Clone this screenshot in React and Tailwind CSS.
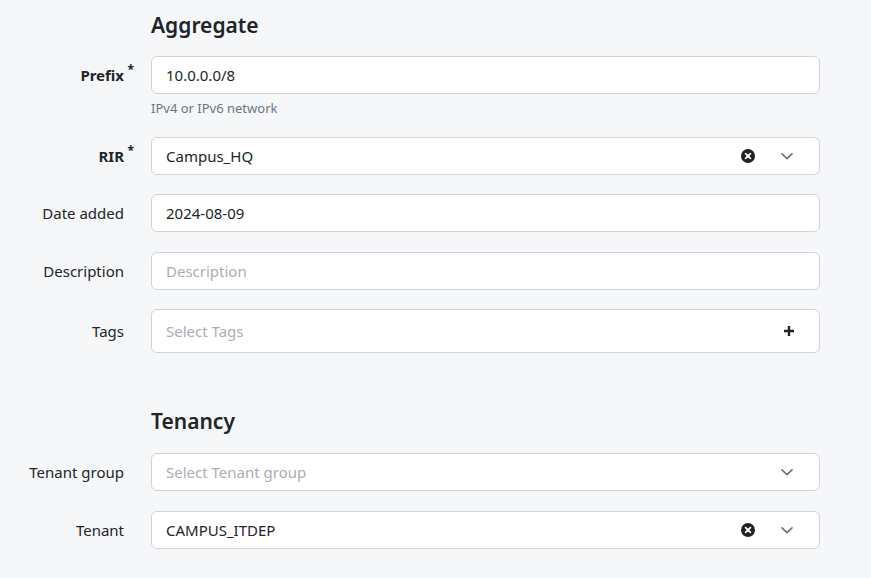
import React from "react";

function ClearIcon() {
    return (
        <svg width="14" height="14" viewBox="0 0 14 14">
            <circle cx="7" cy="7" r="7" fill="#1f2328" />
            <path d="M4.6 4.6 L9.4 9.4 M9.4 4.6 L4.6 9.4" stroke="#fff" strokeWidth="1.8" strokeLinecap="round" />
        </svg>
    );
}

function Chevron() {
    return (
        <svg width="14" height="14" viewBox="0 0 14 14" fill="none">
            <path d="M2 4.8 L7 9.6 L12 4.8" stroke="#6c757d" strokeWidth="1.7" strokeLinecap="round" strokeLinejoin="round" />
        </svg>
    );
}

function Plus() {
    return (
        <svg width="12" height="12" viewBox="0 0 12 12">
            <path d="M6 1 V11 M1 6 H11" stroke="#1f2328" strokeWidth="2.4" />
        </svg>
    );
}

function Label({ children, required, tall }) {
    return (
        <div className={`relative w-[124px] shrink-0 flex items-center justify-end ${tall ? "h-[44px]" : "h-[38px]"} ${required ? "font-bold" : ""}`}>
            <span>{children}</span>
            {required && <span className="absolute right-[-10px] top-[8px] text-[12px] leading-none font-bold">*</span>}
        </div>
    );
}

function Field({ value, placeholder, clear, chevron, plus, tall }) {
    return (
        <div className={`w-[669px] ${tall ? "h-[44px]" : "h-[38px]"} bg-white border border-[#ced4da] rounded-[6px] flex items-center pl-[14px] pr-[25px]`}>
            <span className={`flex-1 ${value ? "text-[#212529]" : "text-[#a9aeb4]"}`}>{value || placeholder}</span>
            {clear && <span className="mr-[25px] flex"><ClearIcon /></span>}
            {chevron && <span className="flex"><Chevron /></span>}
            {plus && <span className="flex mr-[-1px]"><Plus /></span>}
        </div>
    );
}

function Row({ label, required, tall, children, className }) {
    return (
        <div className={`flex items-start gap-[27px] ${className || ""}`}>
            <Label required={required} tall={tall}>{label}</Label>
            <div>{children}</div>
        </div>
    );
}

export default function App() {
    return (
        <div className="min-h-screen w-[871px] h-[578px] overflow-hidden bg-[#f6f7f9] text-[15px] text-[#212529]" style={{ fontFamily: '"Noto Sans", "Open Sans", sans-serif' }}>
            <h2 className="pl-[151px] pt-[10px] text-[21px] font-semibold leading-[30px] text-[#212529]">Aggregate</h2>

            <Row label="Prefix" required className="mt-[16px]">
                <Field value="10.0.0.0/8" />
                <p className="text-[13px] text-[#6c757d] mt-[5px] leading-[18px]">IPv4 or IPv6 network</p>
            </Row>

            <Row label="RIR" required className="mt-[20px]">
                <Field value="Campus_HQ" clear chevron />
            </Row>

            <Row label="Date added" className="mt-[19px]">
                <Field value="2024-08-09" />
            </Row>

            <Row label="Description" className="mt-[20px]">
                <Field placeholder="Description" />
            </Row>

            <Row label="Tags" tall className="mt-[19px]">
                <Field placeholder="Select Tags" plus tall />
            </Row>

            <h2 className="pl-[151px] mt-[53px] text-[21px] font-semibold leading-[30px] text-[#212529]">Tenancy</h2>

            <Row label="Tenant group" className="mt-[17px]">
                <Field placeholder="Select Tenant group" chevron />
            </Row>

            <Row label="Tenant" className="mt-[20px]">
                <Field value="CAMPUS_ITDEP" clear chevron />
            </Row>
        </div>
    );
}
